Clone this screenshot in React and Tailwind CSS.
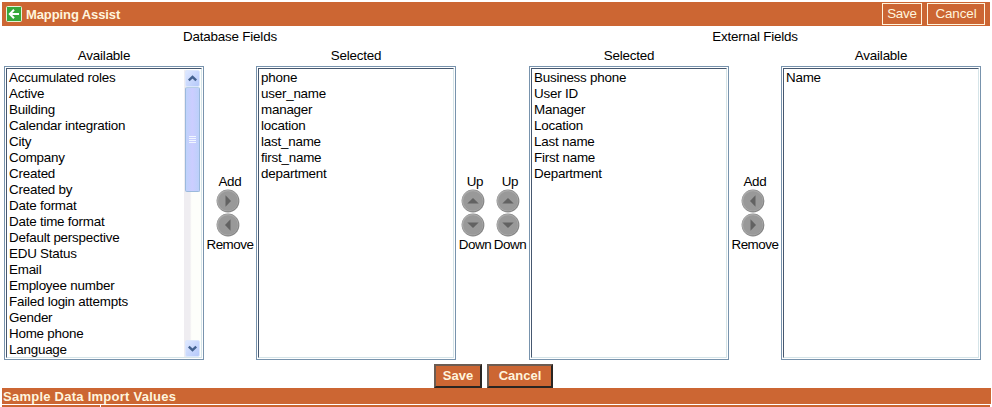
const databaseAvailable = [
  'Accumulated roles', 'Active', 'Building', 'Calendar integration', 'City', 'Company',
  'Created', 'Created by', 'Date format', 'Date time format', 'Default perspective',
  'EDU Status', 'Email', 'Employee number', 'Failed login attempts', 'Gender',
  'Home phone', 'Language',
];
const databaseSelected = ['phone', 'user_name', 'manager', 'location', 'last_name', 'first_name', 'department'];
const externalSelected = ['Business phone', 'User ID', 'Manager', 'Location', 'Last name', 'First name', 'Department'];

const rotations = { right: 0, down: 90, left: 180, up: 270 };

function RoundButton({ dir }) {
  return (
    <svg width="24" height="24" viewBox="0 0 24 24" className="block">
      <circle cx="12" cy="12" r="11.4" fill="#858585" />
      <circle cx="11.6" cy="11.6" r="10.7" fill="#aaa" />
      <circle cx="12" cy="12" r="9.8" fill="#999" />
      <path d="M9.5 6.3L15 12L9.5 17.7Z" fill="#626262" transform={`rotate(${rotations[dir]} 12 12)`} />
    </svg>
  );
}

function Mover({ top, bottom, first, second, className }) {
  return (
    <div className={`flex flex-col items-center pt-[108px] ${className}`}>
      <span className="relative left-[2px] h-[15px] leading-[15px] tracking-[-0.2px]">{top}</span>
      <RoundButton dir={first} />
      <RoundButton dir={second} />
      <span className="relative left-[2px] h-4 leading-4 tracking-[-0.45px]">{bottom}</span>
    </div>
  );
}

function Chevron({ down }) {
  return (
    <div className="flex h-[17px] w-[15px] shrink-0 items-center justify-center rounded-[2px] border border-[#dce7fc] bg-linear-to-br from-[#dfe8ff] to-[#b5c9fa]">
      <svg width="9" height="7" viewBox="0 0 9 7" className={down ? 'rotate-180' : ''}>
        <path d="M.8 5.4L4.5 1.8L8.2 5.4" fill="none" stroke="#43618f" strokeWidth="2.4" />
      </svg>
    </div>
  );
}

function ScrollBar() {
  return (
    <div className="flex w-[17px] shrink-0 flex-col items-center bg-linear-to-r from-[#efedf1] from-35% to-[#fdfefb] to-45%">
      <Chevron />
      <div className="flex h-[105px] w-[15px] shrink-0 items-center justify-center rounded-[2px] border border-[#9bb9dc] border-t-[#b6cee5] bg-linear-to-r from-[#bfd2fb] via-[#cbcdff] to-[#bcd0fa]">
        <div className="flex w-[7px] flex-col gap-[1px]">
          <i className="h-[1px] bg-[#f0f6ff]" />
          <i className="h-[1px] bg-[#f0f6ff]" />
          <i className="h-[1px] bg-[#f0f6ff]" />
          <i className="h-[1px] bg-[#f0f6ff]" />
        </div>
      </div>
      <div className="flex-1" />
      <Chevron down />
    </div>
  );
}

function FieldList({ items, scroll }) {
  return (
    <div className="h-[294px] w-[200px] shrink-0 border border-[#7893ad] p-[1px]">
      <div className="flex h-full border border-t-[#465870] border-r-[#d5e4e8] border-b-[#d5e4e8] border-l-[#465870] pt-[1px]">
        <ul className="flex-1 overflow-hidden pl-[2px] tracking-[-0.22px]">
          {items.map((item) => <li key={item} className="h-4 leading-4 whitespace-nowrap">{item}</li>)}
        </ul>
        {scroll && <ScrollBar />}
      </div>
    </div>
  );
}

function ActionButton({ children, className }) {
  return (
    <button className={`h-6 border-2 border-t-[#6c5c52] border-r-[#292522] border-b-[#292522] border-l-[#6c5c52] bg-[#cc6633] pb-[1px] text-[13px] leading-[19px] font-bold text-[#fff5de] ${className}`}>
      {children}
    </button>
  );
}

export default function App() {
  return (
    <main className="h-[407px] w-[992px] overflow-hidden bg-white pt-[2px] font-['Liberation_Sans',Arial,sans-serif] text-[13.4px] text-black">
      <header className="ml-[2px] flex h-6 w-[988px] items-center bg-[#cc6633] pl-1 text-[#fff5de]">
        <svg width="16" height="16" viewBox="0 0 16 16">
          <rect x=".5" y=".5" width="15" height="15" rx="1" fill="#36a83b" stroke="#e4f5d9" />
          <path d="M13 8H4M8 3.8L3.8 8L8 12.2" fill="none" stroke="#fff" strokeWidth="2" />
        </svg>
        <h1 className="ml-1 flex-1 pt-[1px] text-[13px] font-bold tracking-[-0.1px]">Mapping Assist</h1>
        <button className="h-[22px] w-10 border border-[#fff5de] pb-[1px] leading-[19px] tracking-[-0.2px]">Save</button>
        <button className="mr-[5px] ml-[5px] h-[22px] w-[58px] border border-[#fff5de] pb-[1px] leading-[19px] tracking-[-0.1px]">Cancel</button>
      </header>
      <div className="flex h-5 pl-1 leading-[22px] tracking-[-0.2px]">
        <h2 className="w-[452px] text-center">Database Fields</h2>
        <h2 className="ml-[73px] w-[452px] text-center">External Fields</h2>
      </div>
      <div className="flex h-5 pl-1 leading-5 tracking-[-0.2px]">
        <h3 className="w-[200px] text-center">Available</h3>
        <h3 className="ml-[52px] w-[200px] text-center">Selected</h3>
        <h3 className="ml-[73px] w-[200px] text-center">Selected</h3>
        <h3 className="ml-[52px] w-[200px] text-center">Available</h3>
      </div>
      <section className="flex h-[294px] pl-1">
        <FieldList items={databaseAvailable} scroll />
        <Mover top="Add" bottom="Remove" first="right" second="left" className="w-[52px] pr-[4px]" />
        <FieldList items={databaseSelected} />
        <div className="flex w-[73px]">
          <Mover top="Up" bottom="Down" first="up" second="down" className="w-[34px]" />
          <Mover top="Up" bottom="Down" first="up" second="down" className="w-[36px]" />
        </div>
        <FieldList items={externalSelected} />
        <Mover top="Add" bottom="Remove" first="left" second="right" className="w-[52px] pr-[4px]" />
        <FieldList items={['Name']} />
      </section>
      <div className="flex h-7 gap-[5px] pt-1 pl-[434px]">
        <ActionButton className="w-12">Save</ActionButton>
        <ActionButton className="w-[66px]">Cancel</ActionButton>
      </div>
      <h2 className="ml-[2px] h-4 w-[989px] bg-[#cc6633] pl-[1px] text-[13px] leading-[17px] font-bold tracking-[0.25px] text-[#fff5de]">Sample Data Import Values</h2>
      <div className="mt-[1px] ml-[2px] flex h-[2px] w-[988px] gap-[1px]">
        <div className="w-[98px] bg-[#cc6633]" />
        <div className="flex-1 bg-[#cc6633]" />
      </div>
    </main>
  );
}
